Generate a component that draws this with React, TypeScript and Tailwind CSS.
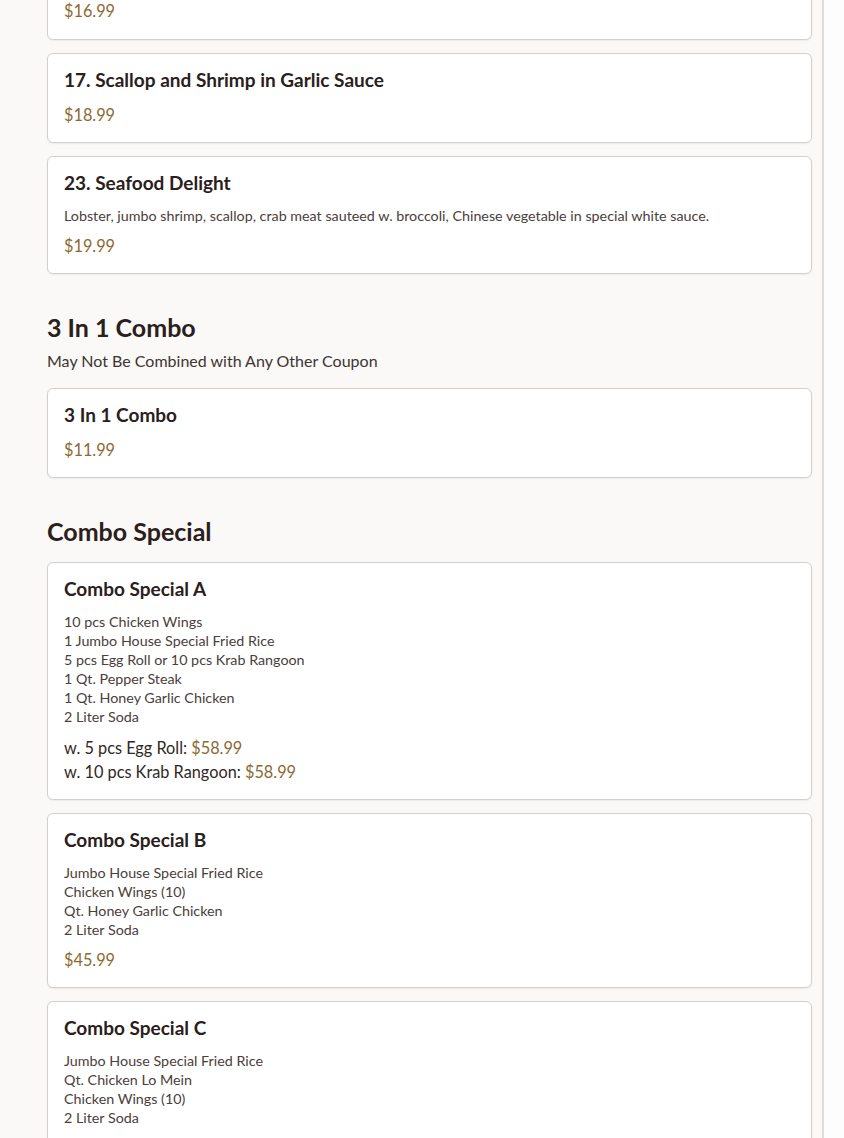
import React from "react";

type Item = {
  title?: string;
  lines?: string[];
  price?: string;
  variants?: { label: string; price: string }[];
};

function Card({ item }: { item: Item }) {
  return (
    <div className="rounded-md border border-[#d3d0cc] bg-white px-4 pt-[12px] pb-[15px] shadow-[0_1px_2px_rgba(0,0,0,0.06)]">
      {item.title && (
        <div className="text-[19px] font-bold leading-[28px] text-[#2a201b]">{item.title}</div>
      )}
      {item.lines && (
        <div className="mt-[9px] text-[14.3px] leading-[19px] text-[#4a403a]">
          {item.lines.map((l, i) => (
            <div key={i}>{l}</div>
          ))}
        </div>
      )}
      {item.price && (
        <div className="mt-[9px] text-[16.3px] leading-[24px] text-[#8b6a32]">{item.price}</div>
      )}
      {item.variants && (
        <div className="mt-[10px] text-[16.3px] leading-[24px] text-[#2f2825]">
          {item.variants.map((v, i) => (
            <div key={i}>
              {v.label} <span className="text-[#8b6a32]">{v.price}</span>
            </div>
          ))}
        </div>
      )}
    </div>
  );
}

function SectionHeader({ title, subtitle }: { title: string; subtitle?: string }) {
  return (
    <div className="mt-[37px] mb-[15px]">
      <h2 className="text-[25px] font-bold leading-[32px] text-[#2a201b]">{title}</h2>
      {subtitle && <p className="mt-[6px] mb-[2px] text-[16px] leading-[24px] text-[#3d3531]">{subtitle}</p>}
    </div>
  );
}

export default function App() {
  return (
    <div
      className="flex h-[1138px] w-full overflow-hidden bg-[#faf9f7]"
      style={{ fontFamily: '"Lato", "Open Sans", sans-serif' }}
    >
      <main className="flex-1 border-r-2 border-[#e0ddd9] pl-[47px] pr-[10px]">
        <div className="flex flex-col gap-[13px]">
          <div className="-mt-[14px] rounded-md border border-[#d3d0cc] bg-white px-4 pt-[12px] pb-[16px] shadow-[0_1px_2px_rgba(0,0,0,0.06)]">
            <div className="text-[16.3px] leading-[24px] text-[#8b6a32]">$16.99</div>
          </div>
          <Card item={{ title: "17. Scallop and Shrimp in Garlic Sauce", price: "$18.99" }} />
          <Card
            item={{
              title: "23. Seafood Delight",
              lines: [
                "Lobster, jumbo shrimp, scallop, crab meat sauteed w. broccoli, Chinese vegetable in special white sauce.",
              ],
              price: "$19.99",
            }}
          />
        </div>

        <SectionHeader title="3 In 1 Combo" subtitle="May Not Be Combined with Any Other Coupon" />
        <div className="flex flex-col gap-[13px]">
          <Card item={{ title: "3 In 1 Combo", price: "$11.99" }} />
        </div>

        <SectionHeader title="Combo Special" />
        <div className="flex flex-col gap-[13px]">
          <Card
            item={{
              title: "Combo Special A",
              lines: [
                "10 pcs Chicken Wings",
                "1 Jumbo House Special Fried Rice",
                "5 pcs Egg Roll or 10 pcs Krab Rangoon",
                "1 Qt. Pepper Steak",
                "1 Qt. Honey Garlic Chicken",
                "2 Liter Soda",
              ],
              variants: [
                { label: "w. 5 pcs Egg Roll:", price: "$58.99" },
                { label: "w. 10 pcs Krab Rangoon:", price: "$58.99" },
              ],
            }}
          />
          <Card
            item={{
              title: "Combo Special B",
              lines: ["Jumbo House Special Fried Rice", "Chicken Wings (10)", "Qt. Honey Garlic Chicken", "2 Liter Soda"],
              price: "$45.99",
            }}
          />
          <Card
            item={{
              title: "Combo Special C",
              lines: ["Jumbo House Special Fried Rice", "Qt. Chicken Lo Mein", "Chicken Wings (10)", "2 Liter Soda"],
              price: "$45.99",
            }}
          />
        </div>
      </main>
      <div className="w-[20px] shrink-0 bg-[#fdfdfd]" />
    </div>
  );
}
